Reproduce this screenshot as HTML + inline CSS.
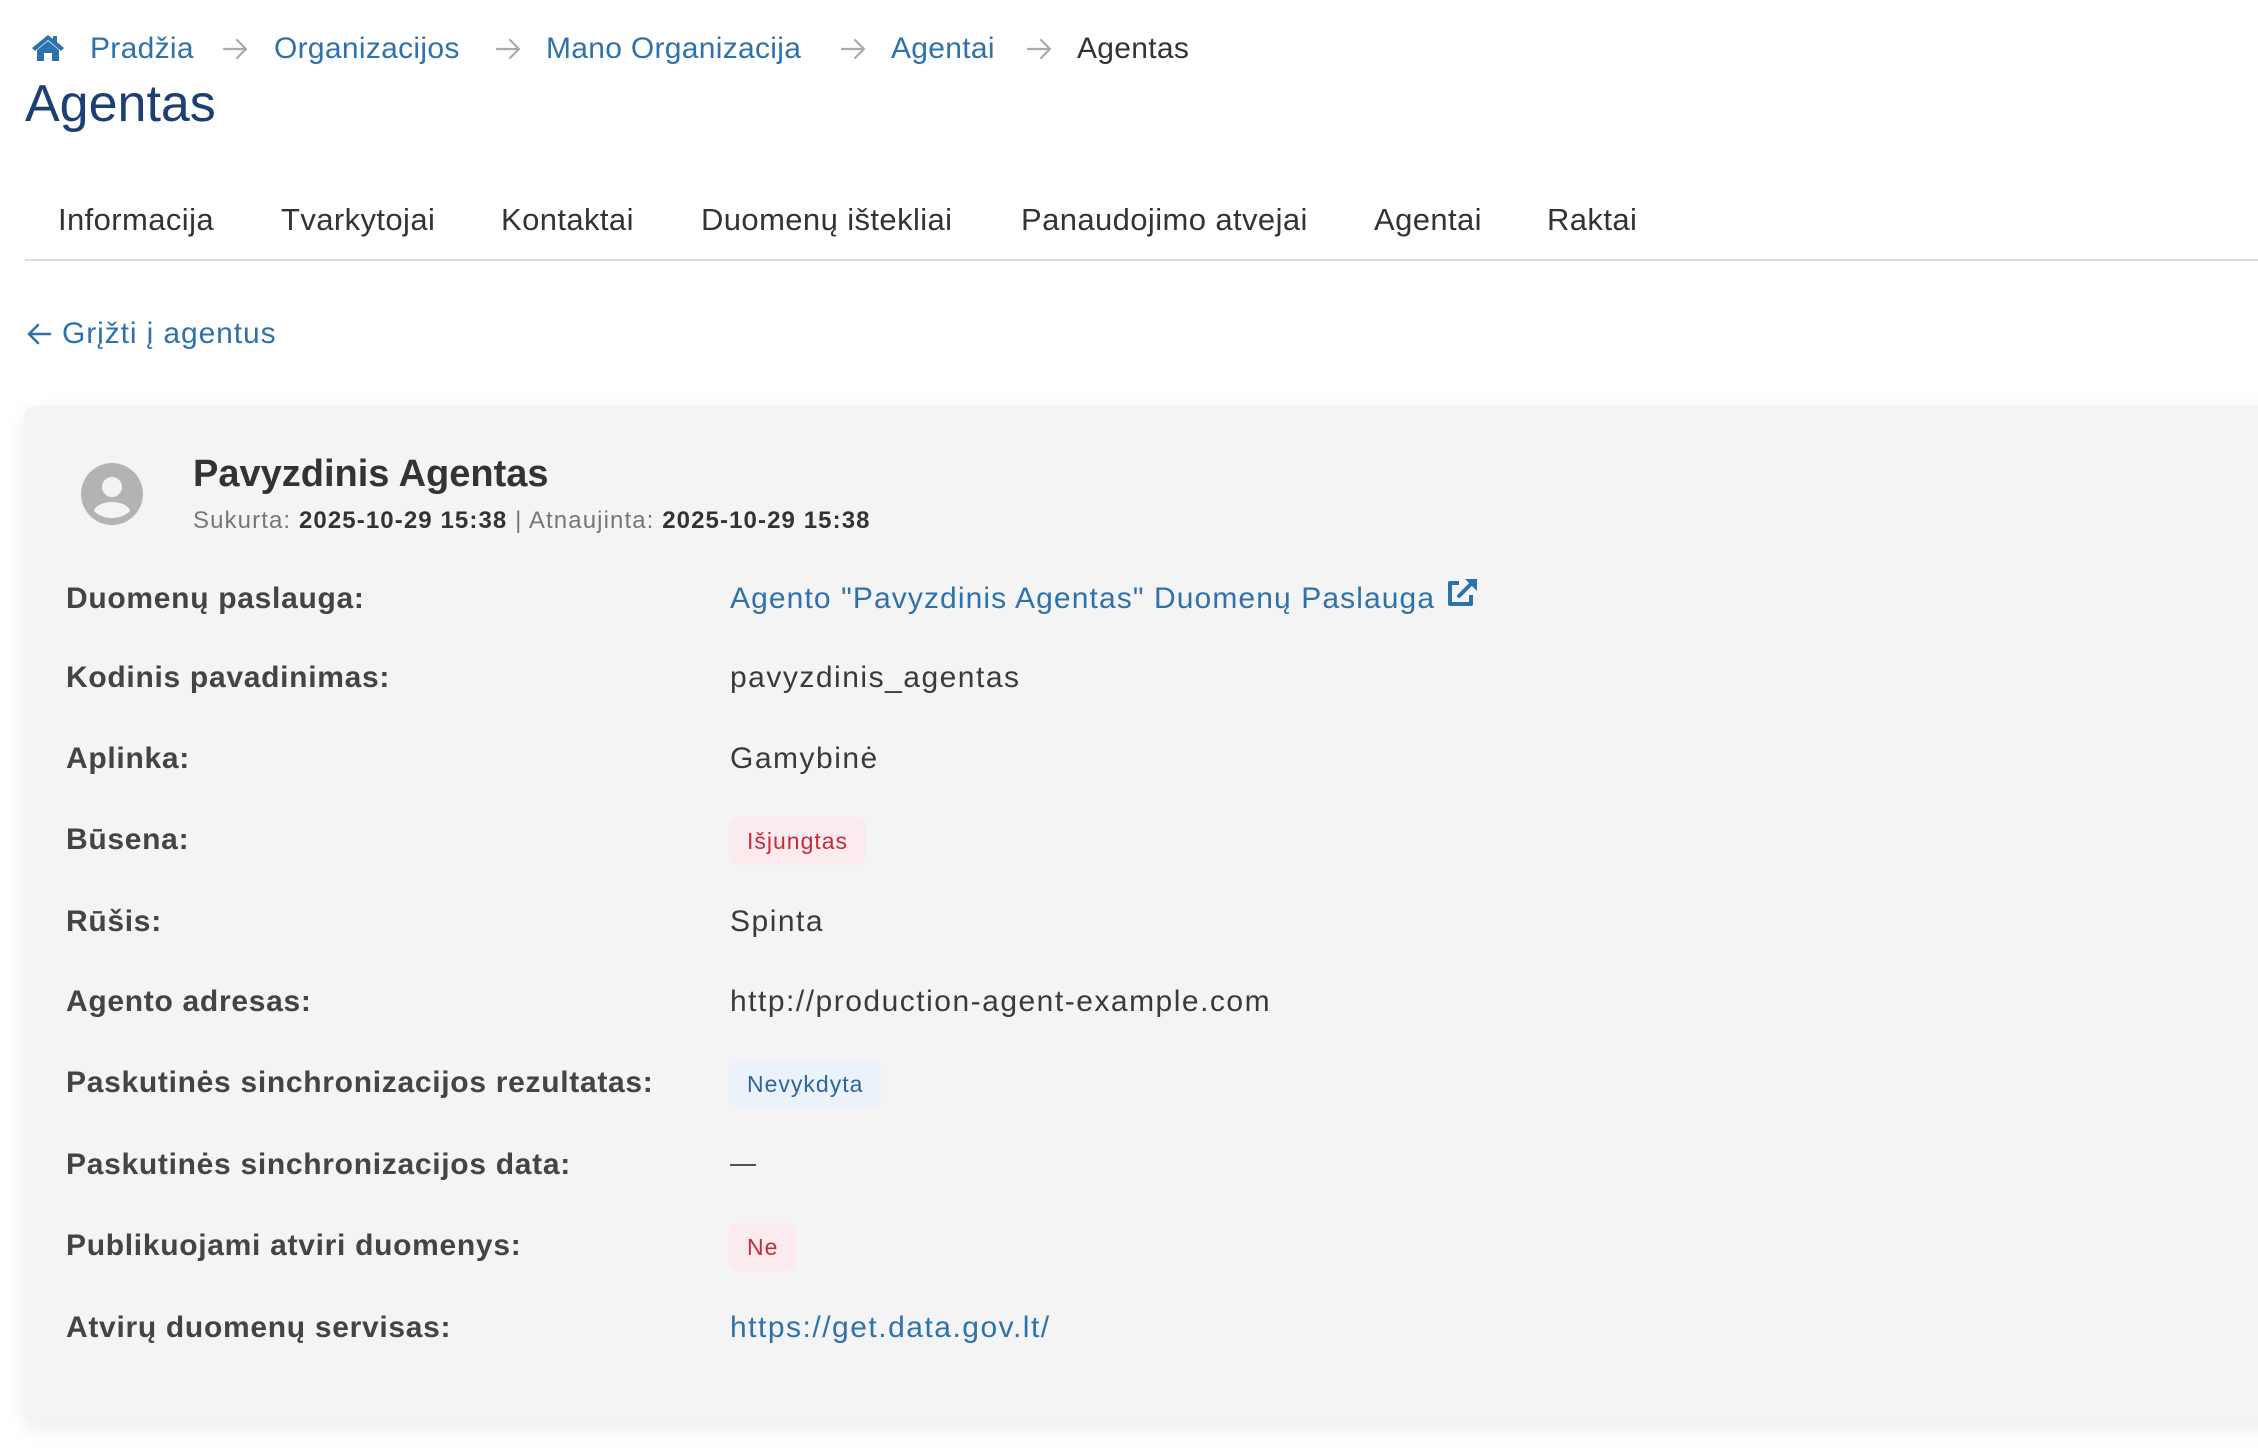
<!DOCTYPE html>
<html><head><meta charset="utf-8"><style>
*{margin:0;padding:0;box-sizing:border-box}
body{width:2258px;height:1450px;overflow:hidden;background:#fff;font-family:"Liberation Sans",sans-serif;color:#333;position:relative}
.a{position:absolute;white-space:nowrap}
.bc{font-size:30px;top:31px;line-height:36px;letter-spacing:0.3px}
.lnk{color:#2e72ad}
.tab{font-size:31px;top:200px;color:#333;line-height:40px;letter-spacing:0.4px}
.card{position:absolute;left:24px;top:406px;width:2300px;height:1017px;background:#f4f4f4;border-radius:12px;box-shadow:0 6px 20px rgba(0,0,0,.08)}
.lbl{left:66px;font-size:30px;font-weight:bold;color:#444;line-height:36px;letter-spacing:0.7px}
.val{left:730px;font-size:30px;color:#3a3a3a;line-height:36px;letter-spacing:1.5px}
.badge{left:729px;height:48px;border-radius:8px;font-size:23px;line-height:48px;padding:0 18px;letter-spacing:1px}
</style></head><body>
<svg class="a" style="left:30px;top:33px" width="36" height="28" viewBox="0 0 36 28"><path d="M18 2 L2 15 L5 18 L18 7 L31 18 L34 15 L27 9 V3 H23 V6 Z" fill="#2e72ad"/><path d="M7 17 L18 8 L29 17 V28 H22 V20 H14 V28 H7 Z" fill="#2e72ad"/></svg>
<div class="a bc lnk" style="left:90px">Pradžia</div>
<div class="a bc lnk" style="left:274px">Organizacijos</div>
<div class="a bc lnk" style="left:546px">Mano Organizacija</div>
<div class="a bc lnk" style="left:891px">Agentai</div>
<div class="a bc" style="left:1077px;color:#333">Agentas</div>
<svg class="a" style="left:0;top:0" width="1100" height="80"><g fill="none" stroke="#aaa" stroke-width="2.2" stroke-linecap="round" stroke-linejoin="round"><path d="M224 49 H246 M237 40 L246 49 L237 58"/><path d="M497 49 H519 M510 40 L519 49 L510 58"/><path d="M842 49 H864 M855 40 L864 49 L855 58"/><path d="M1028 49 H1050 M1041 40 L1050 49 L1041 58"/></g></svg>
<div class="a" style="left:25px;top:74px;font-size:52px;color:#1d3f73;line-height:60px">Agentas</div>
<div class="a tab" style="left:58px">Informacija</div>
<div class="a tab" style="left:281px">Tvarkytojai</div>
<div class="a tab" style="left:501px">Kontaktai</div>
<div class="a tab" style="left:701px">Duomenų ištekliai</div>
<div class="a tab" style="left:1021px">Panaudojimo atvejai</div>
<div class="a tab" style="left:1374px">Agentai</div>
<div class="a tab" style="left:1547px">Raktai</div>
<div class="a" style="left:25px;top:259px;width:2240px;height:2px;background:#ddd"></div>
<svg class="a" style="left:26px;top:322px" width="26" height="24" viewBox="0 0 26 24"><path d="M24 12 H3 M12 3 L3 12 L12 21" fill="none" stroke="#2e72ad" stroke-width="2.6" stroke-linecap="round" stroke-linejoin="round"/></svg>
<div class="a lnk" style="left:62px;top:315px;font-size:30px;line-height:38px;letter-spacing:0.9px">Grįžti į agentus</div>
<div class="card"></div>
<svg class="a" style="left:81px;top:463px" width="62" height="62" viewBox="0 0 62 62"><circle cx="31" cy="31" r="31" fill="#b3b3b3"/><circle cx="31" cy="24" r="10" fill="#f4f4f4"/><path d="M13 48 C16 36 46 36 49 48 C44 53 38 55 31 55 C24 55 18 53 13 48Z" fill="#f4f4f4"/></svg>
<div class="a" style="left:193px;top:452px;font-size:38px;font-weight:bold;color:#333;line-height:44px">Pavyzdinis Agentas</div>
<div class="a" style="left:193px;top:506px;font-size:24px;color:#777;line-height:30px;letter-spacing:1.1px">Sukurta: <b style="color:#333">2025-10-29 15:38</b> | Atnaujinta: <b style="color:#333">2025-10-29 15:38</b></div>
<div class="a lbl" style="top:581px">Duomenų paslauga:</div>
<div class="a val lnk" style="top:581px;color:#2e72ad;letter-spacing:1.1px">Agento "Pavyzdinis Agentas" Duomenų Paslauga</div>
<svg class="a" style="left:1446px;top:578px" width="32" height="30" viewBox="0 0 32 30"><path d="M13 5 H4 V26 H25 V17" fill="none" stroke="#2e72ad" stroke-width="4" stroke-linejoin="round"/><path d="M13 18 L28 3" stroke="#2e72ad" stroke-width="4" stroke-linecap="round"/><path d="M19 1 H31 V13 Z" fill="#2e72ad"/></svg>
<div class="a lbl" style="top:660px">Kodinis pavadinimas:</div>
<div class="a val" style="top:660px">pavyzdinis_agentas</div>
<div class="a lbl" style="top:741px">Aplinka:</div>
<div class="a val" style="top:741px">Gamybinė</div>
<div class="a lbl" style="top:822px">Būsena:</div>
<div class="a badge" style="top:817px;background:#fcebee;color:#c42b3b">Išjungtas</div>
<div class="a lbl" style="top:904px">Rūšis:</div>
<div class="a val" style="top:904px">Spinta</div>
<div class="a lbl" style="top:984px">Agento adresas:</div>
<div class="a val" style="top:984px">http://production-agent-example.com</div>
<div class="a lbl" style="top:1065px">Paskutinės sinchronizacijos rezultatas:</div>
<div class="a badge" style="top:1060px;background:#ebf2fa;color:#2e64a0">Nevykdyta</div>
<div class="a lbl" style="top:1147px">Paskutinės sinchronizacijos data:</div>
<div class="a" style="left:730px;top:1164px;width:26px;height:2px;background:#555"></div>
<div class="a lbl" style="top:1228px">Publikuojami atviri duomenys:</div>
<div class="a badge" style="top:1223px;background:#fcebee;color:#c42b3b">Ne</div>
<div class="a lbl" style="top:1310px">Atvirų duomenų servisas:</div>
<div class="a val lnk" style="top:1310px;color:#2e72ad">https://get.data.gov.lt/</div>
</body></html>
